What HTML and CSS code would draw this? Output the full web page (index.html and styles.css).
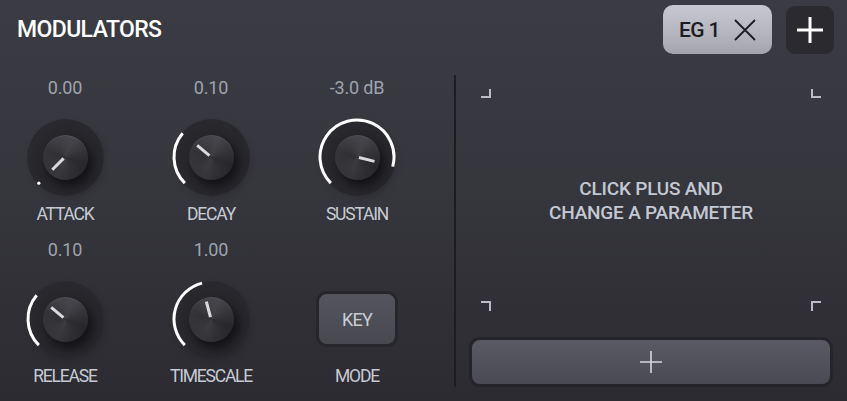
FILE: index.html
```html
<!DOCTYPE html>
<html lang="en">
<head>
<meta charset="utf-8">
<title>Modulators</title>
<link rel="stylesheet" href="styles.css">
</head>
<body>
<div class="panel">
  <header class="header">
    <h1 class="title">MODULATORS</h1>
    <div class="header-actions">
      <button class="chip"><span>EG 1</span>
        <svg class="chip-x" viewBox="0 0 22 22" width="22" height="22"><path d="M1 1L21 21M21 1L1 21" stroke="#1c1c21" stroke-width="1.8" fill="none"/></svg>
      </button>
      <button class="icon-btn">
        <svg viewBox="0 0 26 26" width="26" height="26"><path d="M13 0V26M0 13H26" stroke="#ffffff" stroke-width="3" fill="none"/></svg>
      </button>
    </div>
  </header>

  <main class="main">
    <section class="knobs">
      <div class="ctrl">
        <div class="value">0.00</div>
        <div class="knob">
          <div class="well"></div>
          <div class="cap"></div>
          <svg class="dial" viewBox="0 0 80 80" width="80" height="80">
            <circle cx="13.84" cy="66.16" r="1.6" fill="#ffffff"/>
            <line x1="38.59" y1="41.41" x2="27.27" y2="52.73" class="ptr"/>
          </svg>
        </div>
        <div class="label">ATTACK</div>
      </div>

      <div class="ctrl">
        <div class="value">0.10</div>
        <div class="knob">
          <div class="well"></div>
          <div class="cap"></div>
          <svg class="dial" viewBox="0 0 80 80" width="80" height="80">
            <path d="M13.84 66.16A37 37 0 0 1 11.66 16.22" class="arc"/>
            <line x1="38.47" y1="38.71" x2="26.21" y2="28.43" class="ptr"/>
          </svg>
        </div>
        <div class="label">DECAY</div>
      </div>

      <div class="ctrl">
        <div class="value">-3.0 dB</div>
        <div class="knob">
          <div class="well"></div>
          <div class="cap"></div>
          <svg class="dial" viewBox="0 0 80 80" width="80" height="80">
            <path d="M13.84 66.16A37 37 0 1 1 75.74 49.58" class="arc"/>
            <line x1="41.94" y1="40.48" x2="57.47" y2="44.35" class="ptr"/>
          </svg>
        </div>
        <div class="label">SUSTAIN</div>
      </div>

      <div class="ctrl">
        <div class="value">0.10</div>
        <div class="knob">
          <div class="well"></div>
          <div class="cap"></div>
          <svg class="dial" viewBox="0 0 80 80" width="80" height="80">
            <path d="M13.84 66.16A37 37 0 0 1 11.66 16.22" class="arc"/>
            <line x1="38.47" y1="38.71" x2="26.21" y2="28.43" class="ptr"/>
          </svg>
        </div>
        <div class="label">RELEASE</div>
      </div>

      <div class="ctrl">
        <div class="value">1.00</div>
        <div class="knob">
          <div class="well"></div>
          <div class="cap"></div>
          <svg class="dial" viewBox="0 0 80 80" width="80" height="80">
            <path d="M13.84 66.16A37 37 0 0 1 31.05 4.1" class="arc"/>
            <line x1="39.48" y1="38.07" x2="35.34" y2="22.61" class="ptr"/>
          </svg>
        </div>
        <div class="label">TIMESCALE</div>
      </div>

      <div class="ctrl">
        <div class="value"></div>
        <div class="mode-slot"><button class="key">KEY</button></div>
        <div class="label">MODE</div>
      </div>
    </section>

    <div class="divider"></div>

    <section class="target">
      <div class="frame">
        <div class="marks"><span class="mark mark-tl"></span><span class="mark mark-tr"></span></div>
        <p class="hint">CLICK PLUS AND<br>CHANGE A PARAMETER</p>
        <div class="marks"><span class="mark mark-bl"></span><span class="mark mark-br"></span></div>
      </div>
      <button class="add">
        <svg viewBox="0 0 22 22" width="22" height="22"><path d="M11 0V22M0 11H22" stroke="#d6d6dc" stroke-width="1.6" fill="none"/></svg>
      </button>
    </section>
  </main>
</div>
</body>
</html>
```

FILE: styles.css
```css
* { box-sizing: border-box; }

html, body {
  margin: 0;
  padding: 0;
  background: #2c2b31;
}

body {
  font-family: Roboto, "Liberation Sans", sans-serif;
  width: 847px;
  height: 401px;
  overflow: hidden;
}

button {
  font-family: inherit;
  border: none;
  padding: 0;
  margin: 0;
  cursor: pointer;
}

.panel {
  width: 847px;
  height: 401px;
  display: flex;
  flex-direction: column;
  padding-bottom: 14px;
  background: linear-gradient(180deg, #3b3b43 0%, #36363d 45%, #2c2b31 100%);
}

/* header */
.header {
  height: 60px;
  display: flex;
  align-items: center;
  justify-content: space-between;
  padding: 0 13px 0 17px;
}

.title {
  margin: 0;
  font-size: 23px;
  font-weight: 500;
  letter-spacing: -0.6px;
  color: #ffffff;
}

.header-actions {
  display: flex;
  align-items: center;
  gap: 14px;
}

.chip {
  height: 49px;
  width: 109px;
  border-radius: 10px;
  display: flex;
  align-items: center;
  justify-content: center;
  gap: 14px;
  background: linear-gradient(180deg, #c8c8d0 0%, #b4b4bc 60%, #a4a4ad 100%);
  color: #1c1c22;
  font-size: 21px;
  font-weight: 500;
  letter-spacing: -0.6px;
}

.icon-btn {
  width: 48px;
  height: 48px;
  border-radius: 9px;
  background: #2a2a2f;
  display: flex;
  align-items: center;
  justify-content: center;
}

/* main */
.main {
  margin-top: 16px;
  flex: 1;
  display: flex;
}

.knobs {
  padding-top: 2px;
  display: grid;
  grid-template-columns: repeat(3, 130px);
  column-gap: 16px;
  row-gap: 14px;
  align-content: start;
  margin-right: 32px;
}

.ctrl {
  display: flex;
  flex-direction: column;
  align-items: center;
}

.value {
  height: 22px;
  line-height: 22px;
  font-size: 18px;
  color: #9ea4ae;
  letter-spacing: -0.2px;
}

.knob {
  margin-top: 18px;
  width: 80px;
  height: 80px;
  display: grid;
  place-items: center;
}

.knob > * { grid-area: 1 / 1; }

.well {
  width: 77px;
  height: 77px;
  border-radius: 50%;
  background: radial-gradient(circle at 58% 58%, #222226 0%, #27272c 55%, #2c2c32 100%);
  box-shadow: 2px 3px 6px rgba(0, 0, 0, 0.12);
}

.cap {
  width: 45px;
  height: 45px;
  border-radius: 50%;
  background:
    conic-gradient(from 20deg, rgba(255,255,255,0.05), rgba(0,0,0,0.12) 25%, rgba(255,255,255,0.05) 50%, rgba(0,0,0,0.12) 75%, rgba(255,255,255,0.05)),
    linear-gradient(160deg, #44444a 0%, #333338 50%, #26262a 100%);
  box-shadow: 4px 6px 10px rgba(0, 0, 0, 0.5), inset 0 1px 0 rgba(255,255,255,0.06);
}

.dial { display: block; }

.arc {
  fill: none;
  stroke: #ffffff;
  stroke-width: 3;
}

.ptr {
  stroke: #d8d8dd;
  stroke-width: 3;
}

.label {
  margin-top: 6px;
  height: 22px;
  line-height: 22px;
  font-size: 17.5px;
  color: #c6cad3;
  letter-spacing: -1.2px;
}

.mode-slot {
  margin-top: 18px;
  width: 80px;
  height: 80px;
  display: flex;
  align-items: center;
  justify-content: center;
}

.key {
  width: 82px;
  height: 56px;
  border-radius: 11px;
  border: 3px solid #26262b;
  background: linear-gradient(180deg, #55555e 0%, #48484f 100%);
  color: #c9cdd6;
  font-size: 18px;
  letter-spacing: -0.8px;
  flex-shrink: 0;
}

.divider {
  width: 2px;
  background: #1d1d21;
}

/* right */
.target {
  flex: 1;
  display: flex;
  flex-direction: column;
  padding: 14px 14px 0 13px;
}

.frame {
  flex: 1;
  margin: 0 12px 26px;
  display: flex;
  flex-direction: column;
}

.marks {
  display: flex;
  justify-content: space-between;
}

.mark {
  width: 10px;
  height: 10px;
  border: 0 solid #bcbcc4;
}

.mark-tl { border-right-width: 2px; border-bottom-width: 2px; height: 9px; }
.mark-tr { border-left-width: 2px; border-bottom-width: 2px; height: 9px; }
.mark-bl { border-right-width: 2px; border-top-width: 2px; }
.mark-br { border-left-width: 2px; border-top-width: 2px; }

.hint {
  flex: 1;
  margin: 0;
  padding-top: 2px;
  display: flex;
  align-items: center;
  justify-content: center;
  text-align: center;
  font-size: 19px;
  font-weight: 500;
  line-height: 24px;
  letter-spacing: -0.2px;
  color: #c3c8d2;
}

.add {
  height: 50px;
  border-radius: 11px;
  border: 3px solid #252529;
  background: linear-gradient(180deg, #5a5a64 0%, #4a4a53 100%);
  display: flex;
  align-items: center;
  justify-content: center;
}
```
